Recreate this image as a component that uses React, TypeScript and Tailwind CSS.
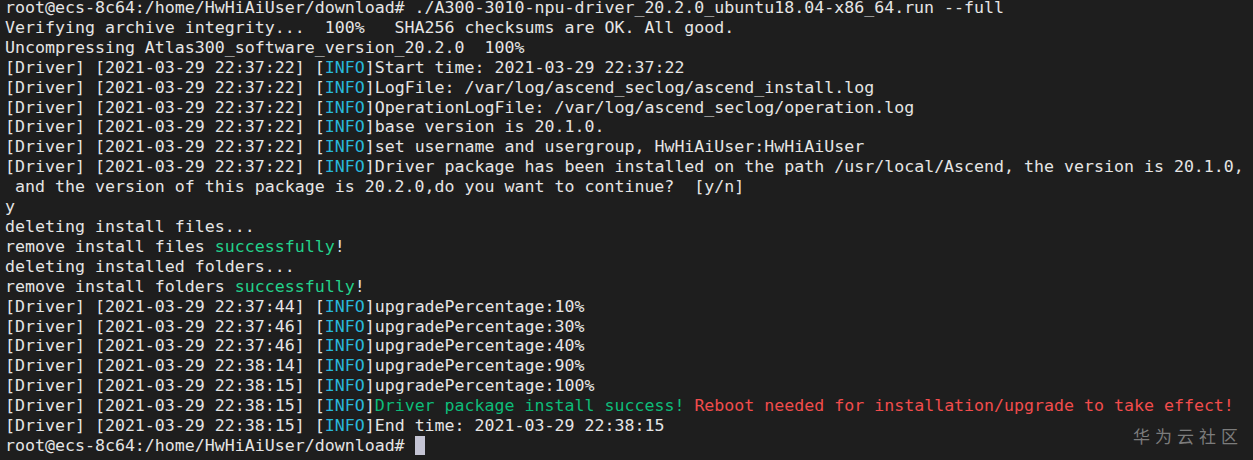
import React from "react"

const INFO = "text-[#29b8db]"

function Log({ time, children }: { time: string; children: React.ReactNode }) {
  return (
    <div>
      {`[Driver] [2021-03-29 ${time}] `}
      <span>[</span>
      <span className={INFO}>INFO</span>
      <span>]</span>
      {children}
    </div>
  )
}

export default function App() {
  return (
    <div className="relative w-[1253px] h-[460px] overflow-hidden bg-[#1e1e1e] text-[#e5e5e5]">
      <div
        className="mt-[-2px] pl-[5px] whitespace-pre text-[16.6px] leading-[19.9px]"
        style={{ fontFamily: '"DejaVu Sans Mono", "Liberation Mono", monospace' }}
      >
        <div>root@ecs-8c64:/home/HwHiAiUser/download# ./A300-3010-npu-driver_20.2.0_ubuntu18.04-x86_64.run --full</div>
        <div>Verifying archive integrity...  100%   SHA256 checksums are OK. All good.</div>
        <div>Uncompressing Atlas300_software_version_20.2.0  100%</div>
        <Log time="22:37:22">Start time: 2021-03-29 22:37:22</Log>
        <Log time="22:37:22">LogFile: /var/log/ascend_seclog/ascend_install.log</Log>
        <Log time="22:37:22">OperationLogFile: /var/log/ascend_seclog/operation.log</Log>
        <Log time="22:37:22">base version is 20.1.0.</Log>
        <Log time="22:37:22">set username and usergroup, HwHiAiUser:HwHiAiUser</Log>
        <Log time="22:37:22">Driver package has been installed on the path /usr/local/Ascend, the version is 20.1.0,</Log>
        <div> and the version of this package is 20.2.0,do you want to continue?  [y/n]</div>
        <div>y</div>
        <div>deleting install files...</div>
        <div>
          remove install files <span className="text-[#23d18b]">successfully</span>!
        </div>
        <div>deleting installed folders...</div>
        <div>
          remove install folders <span className="text-[#23d18b]">successfully</span>!
        </div>
        <Log time="22:37:44">upgradePercentage:10%</Log>
        <Log time="22:37:46">upgradePercentage:30%</Log>
        <Log time="22:37:46">upgradePercentage:40%</Log>
        <Log time="22:38:14">upgradePercentage:90%</Log>
        <Log time="22:38:15">upgradePercentage:100%</Log>
        <Log time="22:38:15">
          <span className="text-[#0dbc79]">Driver package install success!</span>{" "}
          <span className="text-[#f14c4c]">Reboot needed for installation/upgrade to take effect!</span>
        </Log>
        <Log time="22:38:15">End time: 2021-03-29 22:38:15</Log>
        <div className="flex items-center">
          <span>root@ecs-8c64:/home/HwHiAiUser/download# </span>
          <span className="inline-block w-[10px] h-[19px] bg-[#c4c4d4]" />
        </div>
      </div>
      <div
        className="absolute right-[10px] top-[423px] text-[17px] tracking-[5px] text-[#7c7c7c]"
        style={{ fontFamily: '"Noto Sans CJK SC", sans-serif' }}
      >
        华为云社区
      </div>
    </div>
  )
}
